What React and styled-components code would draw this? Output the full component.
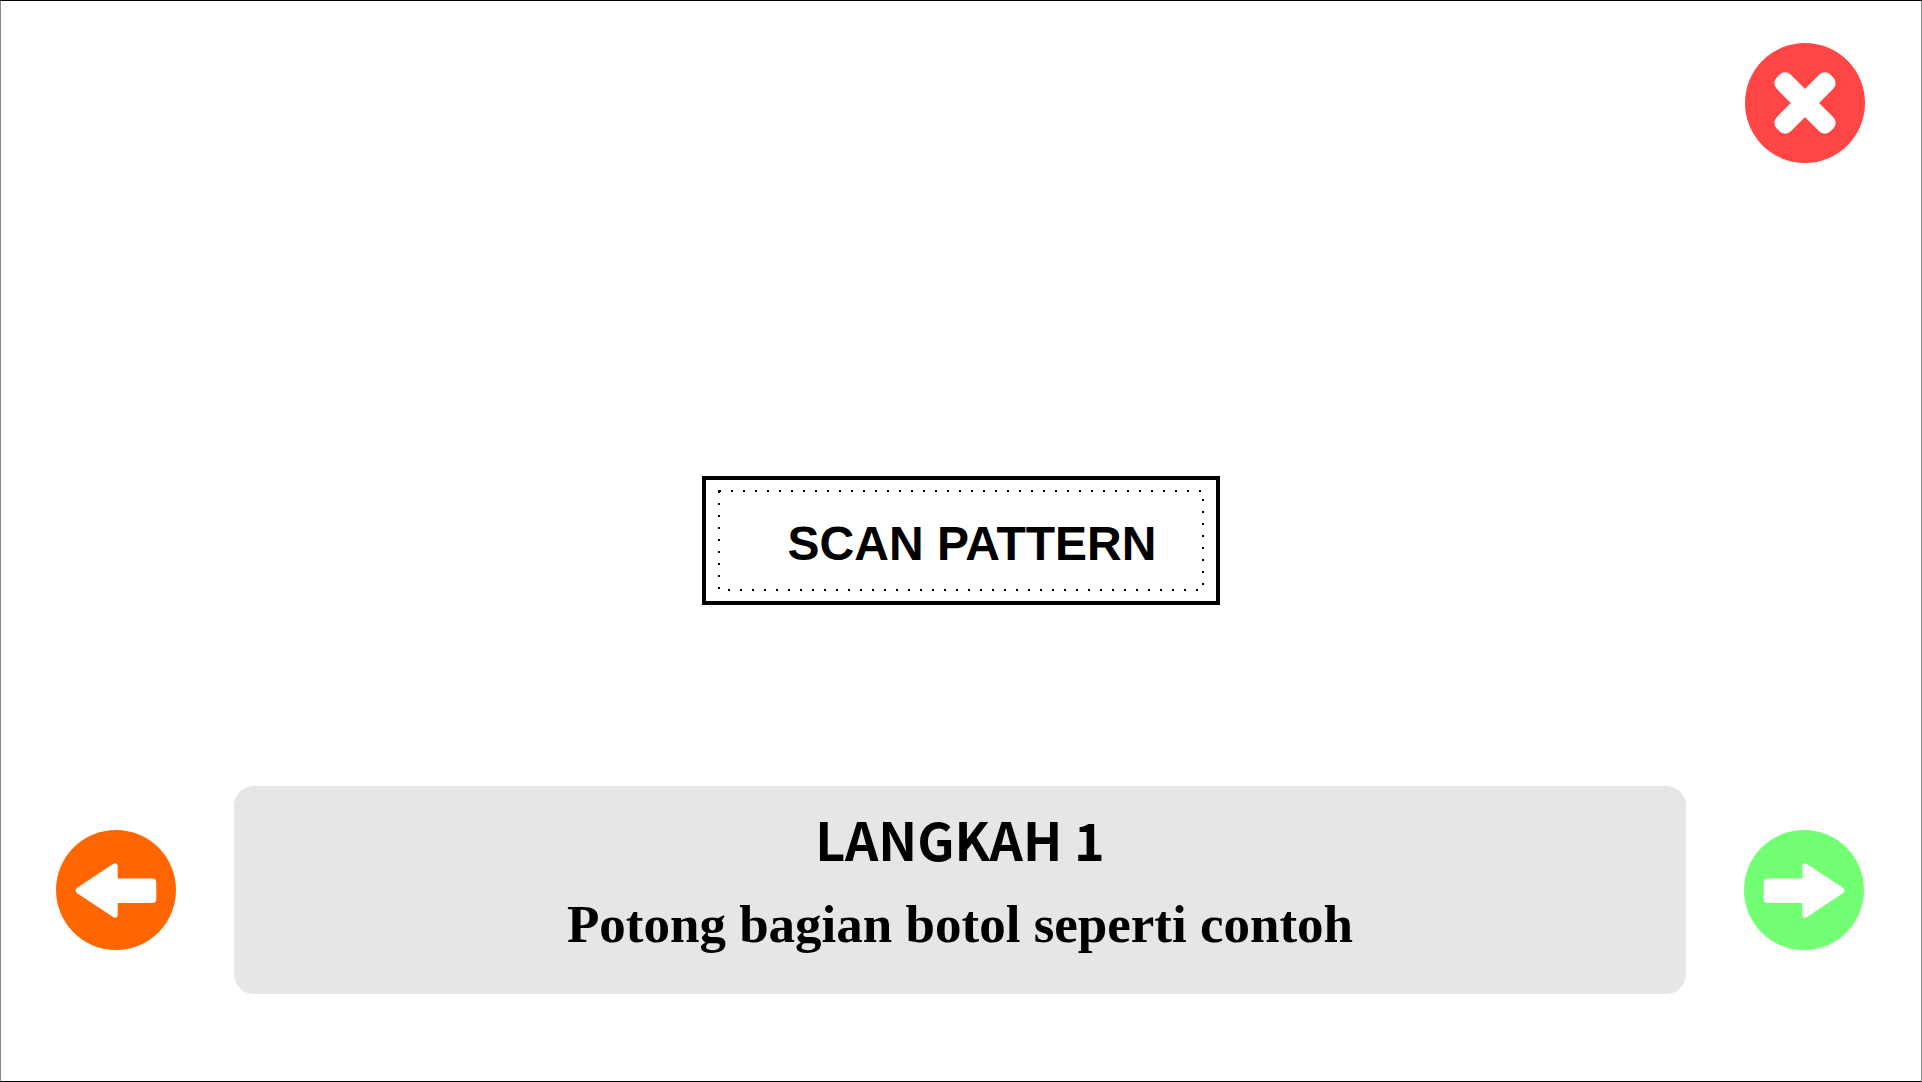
import React from "react";
import styled, { createGlobalStyle } from "styled-components";

const GlobalStyle = createGlobalStyle`
  *, *::before, *::after { box-sizing: border-box; }
  body { margin: 0; background: #fff; color: #000; }
  h1, p { margin: 0; }
`;

const Page = styled.div`
  display: grid;
  grid-template-rows: 1fr auto 1fr;
  min-height: 100vh;
  border: 1px solid #000;
  border-left-color: #888;
  border-right-color: #888;
`;

const Header = styled.header`
  display: flex;
  justify-content: flex-end;
  align-items: flex-start;
  padding: 42px 56px 0;
`;

const Main = styled.main`
  display: flex;
  justify-content: center;
  padding-bottom: 1px;
`;

const Footer = styled.footer`
  display: flex;
  align-items: flex-end;
  padding: 0 57px 87px 55px;
`;

const StepBar = styled.div`
  flex: 1;
  display: flex;
  align-items: center;
  gap: 58px;
`;

const RoundButton = styled.button`
  flex: none;
  width: 120px;
  height: 120px;
  padding: 0;
  border: 0;
  border-radius: 50%;
  background: ${(p) => p.$color};
  cursor: pointer;

  svg {
    display: block;
    width: 100%;
    height: 100%;
    fill: #fff;
  }
`;

const ScanButton = styled.button`
  position: relative;
  width: 518px;
  height: 129px;
  padding: 6px 0 0 22px;
  border: 4px solid #000;
  background: #fff;
  color: #000;
  font: bold 48px/56px "Liberation Sans", Arial, sans-serif;
  cursor: pointer;
`;

const DottedFrame = styled.svg`
  position: absolute;
  inset: 0;
  width: 100%;
  height: 100%;

  rect {
    x: 13px;
    y: 11px;
    width: calc(100% - 26px);
    height: calc(100% - 22px);
    fill: none;
    stroke: #000;
    stroke-width: 2px;
    stroke-dasharray: 2 10;
  }
`;

const StepPanel = styled.section`
  flex: 1;
  padding: 13px 24px 30px;
  border-radius: 20px;
  background: #e6e6e6;
  text-align: center;
`;

const StepTitle = styled.h1`
  margin-bottom: 5px;
  font: bold 52px/80px "Noto Sans CJK SC", "Noto Sans", sans-serif;
`;

const StepText = styled.p`
  font: bold 53px/80px "Liberation Serif", "Times New Roman", serif;
`;

const CloseIcon = () => (
  <svg viewBox="0 0 120 120" aria-hidden="true">
    <g transform="rotate(45 60 60)">
      <rect x="22" y="50" width="76" height="20" rx="8" />
      <rect x="50" y="22" width="20" height="76" rx="8" />
    </g>
  </svg>
);

const ARROW =
  "M61.7 48.6H96.3Q100.3 48.6 100.3 52.6V69Q100.3 73 96.3 73H61.7V84.5C61.7 87.6 59.4 88.6 57 87L21.2 63.2Q17.8 60.6 21.2 57.8L57 33.9C59.4 32.3 61.7 33.4 61.7 36.5Z";

const ArrowIcon = ({ flip }) => (
  <svg viewBox="0 0 120 120" aria-hidden="true">
    <path d={ARROW} transform={flip ? "translate(120 0) scale(-1 1)" : undefined} />
  </svg>
);

export default function App() {
  return (
    <>
      <GlobalStyle />
      <Page>
        <Header>
          <RoundButton type="button" $color="#ff4545" aria-label="Tutup">
            <CloseIcon />
          </RoundButton>
        </Header>
        <Main>
          <ScanButton type="button">
            <DottedFrame aria-hidden="true">
              <rect />
            </DottedFrame>
            SCAN PATTERN
          </ScanButton>
        </Main>
        <Footer>
          <StepBar>
            <RoundButton type="button" $color="#ff6600" aria-label="Sebelumnya">
              <ArrowIcon />
            </RoundButton>
            <StepPanel>
              <StepTitle>LANGKAH 1</StepTitle>
              <StepText>Potong bagian botol seperti contoh</StepText>
            </StepPanel>
            <RoundButton type="button" $color="#73ff73" aria-label="Berikutnya">
              <ArrowIcon flip />
            </RoundButton>
          </StepBar>
        </Footer>
      </Page>
    </>
  );
}
